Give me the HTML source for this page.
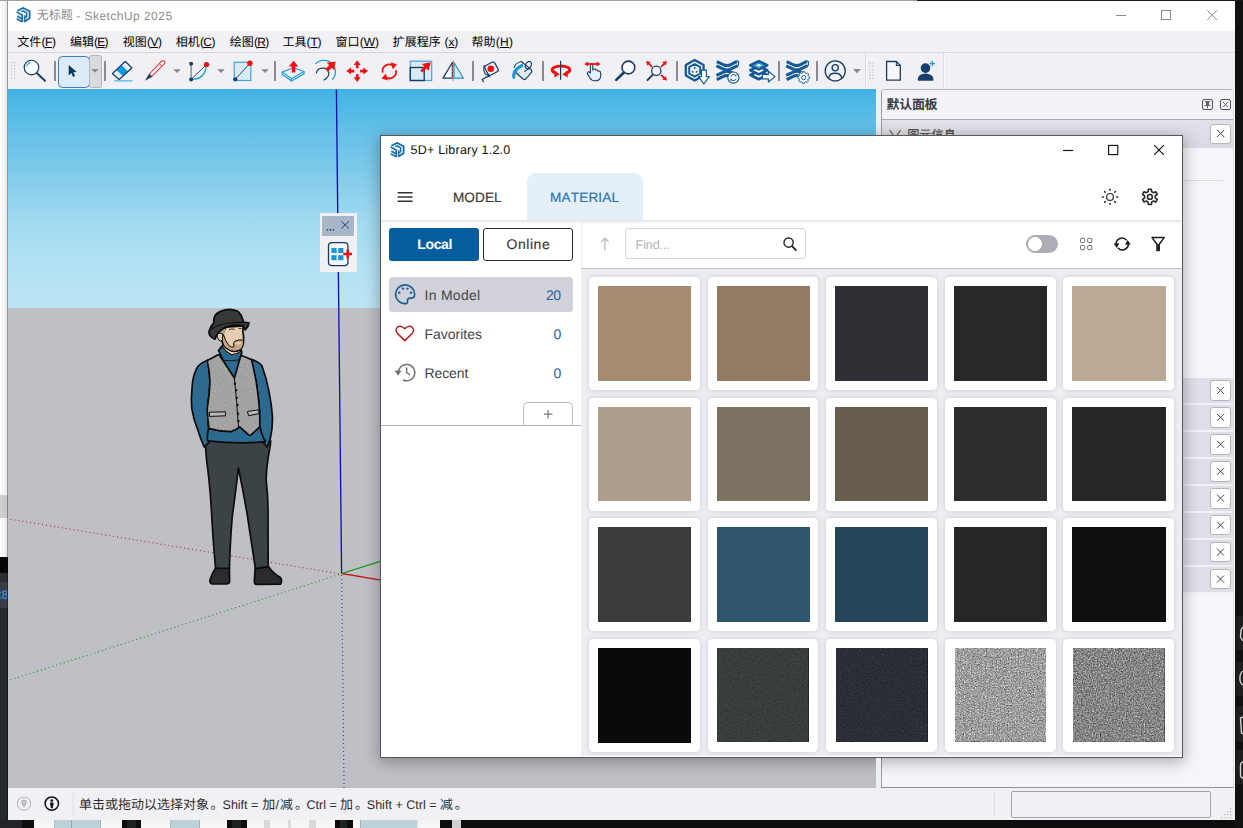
<!DOCTYPE html>
<html lang="zh">
<head>
<meta charset="utf-8">
<title>SketchUp 2025 - 5D+ Library</title>
<style>
html,body{margin:0;padding:0;}
body{width:1243px;height:828px;overflow:hidden;background:#121212;font-family:"Liberation Sans",sans-serif;}
#root{position:relative;width:1243px;height:828px;overflow:hidden;background:#121212;}
.a{position:absolute;}
.t{position:absolute;white-space:pre;line-height:1;font-family:"Liberation Sans",sans-serif;text-rendering:geometricPrecision;font-kerning:none;}
.t.c{font-family:"Liberation Sans","Noto Sans CJK SC",sans-serif;}
svg{position:absolute;overflow:visible;}
u{text-decoration:underline;text-underline-offset:1px;text-decoration-thickness:1px;}
.sep{position:absolute;width:2px;background:#8c8c8c;top:61px;height:20px;}
.dd{position:absolute;width:0;height:0;border-left:3.8px solid transparent;border-right:3.8px solid transparent;border-top:3.8px solid #8a8a8a;}
.xb{position:absolute;width:18.5px;height:18.5px;background:#fdfdfe;border:1px solid #b4b4ba;border-radius:3px;}
.card{position:absolute;width:110.8px;height:113px;background:#fff;border-radius:4.5px;box-shadow:0 0 5px rgba(40,40,90,.17);}
.sw{position:absolute;left:9.05px;top:9px;width:93.15px;height:94.8px;}
</style>
</head>
<body>
<div id="root">
<!-- desktop / other windows peeking behind -->
<div class="a" style="left:0;top:0;width:917px;height:1px;background:#a2a2a2"></div>
<div class="a" style="left:917px;top:0;width:326px;height:1px;background:#1a1a1a"></div>
<div class="a" style="left:0;top:1px;width:8px;height:494px;background:linear-gradient(90deg,#fdfdfd 0,#f6f6f6 45%,#e4e4e4 100%)"></div>
<div class="a" style="left:0;top:495px;width:8px;height:23px;background:linear-gradient(90deg,#d2d2d2,#c4c4c4)"></div>
<div class="a" style="left:0;top:518px;width:8px;height:39px;background:linear-gradient(90deg,#fdfdfd 0,#f4f4f4 50%,#e0e0e0 100%)"></div>
<div class="a" style="left:0;top:557px;width:8px;height:16px;background:#060606"></div>
<div class="a" style="left:0;top:573px;width:8px;height:9px;background:#2b2d30"></div>
<div class="a" style="left:0;top:582px;width:8px;height:26px;background:#393c42"></div>
<div class="a" style="left:0;top:588px;width:7px;height:14px;overflow:hidden"><span class="t" style="left:-5.5px;top:1px;font-size:12.5px;color:#3b86c8;font-weight:bold">28</span></div>
<div class="a" style="left:0;top:608px;width:8px;height:220px;background:#25282c"></div>
<!-- bottom strip under the window -->
<div class="a" style="left:0;top:820px;width:1243px;height:8px;background:#0d0d0d"></div>
<div class="a" style="left:0;top:820px;width:22px;height:8px;background:#222427"></div>
<div class="a" style="left:34px;top:820px;width:88px;height:8px;background:linear-gradient(90deg,#f6f6f6 0 20px,#a9c3ca 20px 21px,#bdd2d8 21px 37px,#8faab2 37px 38px,#bdd2d8 38px 66px,#9fb8bf 66px 67px,#f6f6f6 67px)"></div>
<div class="a" style="left:127px;top:820px;width:9px;height:8px;background:#1c2420"></div>
<div class="a" style="left:141px;top:820px;width:86px;height:8px;background:linear-gradient(90deg,#f6f6f6 0 29px,#a9c3ca 29px 30px,#bdd2d8 30px 58px,#9fb8bf 58px 59px,#f6f6f6 59px)"></div>
<div class="a" style="left:232px;top:820px;width:9px;height:8px;background:#1c2420"></div>
<div class="a" style="left:247px;top:820px;width:88px;height:8px;background:linear-gradient(90deg,#f6f6f6 0 17px,#d9d9d9 17px 23px,#f6f6f6 23px 41px,#dcdcdc 41px 44px,#f6f6f6 44px 62px,#d9d9d9 62px 69px,#f6f6f6 69px)"></div>
<div class="a" style="left:340px;top:820px;width:7px;height:8px;background:#1c2420"></div>
<div class="a" style="left:353px;top:820px;width:87px;height:8px;background:linear-gradient(90deg,#f6f6f6 0 7px,#9fb8bf 7px 8px,#bdd2d8 8px 64px,#e8ecec 64px 66px,#f6f6f6 66px)"></div>
<div class="a" style="left:452px;top:820px;width:9px;height:8px;background:#cfcfd3"></div>
<!-- right strip -->
<div class="a" style="left:1235px;top:1px;width:8px;height:827px;background:#111"></div>
<div class="a" style="left:1236px;top:616px;width:7px;height:34px;background:#1f1f1f"></div>
<div class="a" style="left:1236px;top:662px;width:7px;height:34px;background:#1f1f1f"></div>
<div class="a" style="left:1236px;top:706px;width:7px;height:36px;background:#1f1f1f"></div>
<div class="a" style="left:1236px;top:750px;width:7px;height:34px;background:#1f1f1f"></div>
<svg class="a" style="left:1235px;top:600px" width="8" height="228" viewBox="0 0 8 228"><g fill="none" stroke="#d0d0d0" stroke-width="1.4"><path d="M8 27 L6 30 L5.5 37 L8 41"/><path d="M8 71 Q4.5 73 5 80 Q5.5 84 8 85"/><path d="M8 117 L5.5 118 L6.5 133 L8 134"/><path d="M8 162 Q5.5 162 5.5 166 L5.5 174 Q5.5 178 8 178"/></g></svg>
<!-- main SketchUp window -->
<div class="a" style="left:7px;top:1px;width:1px;height:819px;background:rgba(0,0,0,.34)"></div>
<div class="a" style="left:8px;top:1px;width:1227px;height:819px;background:#f1f1f5"></div>
<div class="a" style="left:1234px;top:1px;width:1px;height:819px;background:#fbfbfb"></div>
<!-- title bar -->
<div class="a" style="left:8px;top:1px;width:1227px;height:30px;background:#fff"></div>
<svg style="left:16.4px;top:6.8px" width="15" height="16" viewBox="0 0 15 16"><g fill="none" stroke-linejoin="miter">
  <path d="M1.4 3.7 L7.2 0.9 L13.6 4.3 L13.6 11.3 L8.2 14.7" stroke="#1a68a4" stroke-width="1.8"/>
  <path d="M3.6 4.3 L7.2 2.6 L12 5.1 L12 10.5 L9 12.3" stroke="#9bd7f6" stroke-width="1.1"/>
  <path d="M5.4 4.9 L7.3 4.1 L10.5 5.9 L10.5 9.7 L8.6 10.8" stroke="#1a68a4" stroke-width="1.4"/>
  <path d="M0.5 4.9 L7 8.5 M1.3 9.3 L6 11.7 M0.7 11.7 L6 14.6" stroke="#1a68a4" stroke-width="1.6"/>
  <path d="M0.9 7.2 L5.6 9.8 M1.2 10.6 L5.4 12.9" stroke="#9bd7f6" stroke-width=".9"/>
  <path d="M6.3 8.3 V15.2" stroke="#1a68a4" stroke-width="1.7"/>
  <path d="M8.7 8.2 V14.6" stroke="#1a68a4" stroke-width="1.3"/>
  <path d="M7.55 7.4 V15.6" stroke="#c4e8fb" stroke-width=".9"/>
</g></svg>
<span class="t c" style="left:36.80px;top:9.30px;font-size:12px;color:#8c8c8c;">无标题</span>
<span id="ttl" class="t" style="left:76.20px;top:10.04px;font-size:12px;color:#8c8c8c;font-weight:normal;letter-spacing:0.464px;">- SketchUp 2025</span>
<svg style="left:1110px;top:5px" width="120" height="22" viewBox="0 0 120 22"><g fill="none" stroke="#8a8a8a" stroke-width="1"><path d="M6 10.5 H16"/><rect x="51.5" y="5.5" width="9" height="9"/><path d="M97.3 5.3 L107 15 M107 5.3 L97.3 15"/></g></svg>
<!-- menu bar -->
<div class="a" style="left:8px;top:31px;width:1227px;height:22px;background:#f1f1f5"></div>
<div class="a" style="left:8px;top:52px;width:1227px;height:1px;background:#d6d6da"></div>
<span class="t c" style="left:17.30px;top:35.60px;font-size:12px;color:#000;">文件</span><span id="mF" class="t" style="left:41.50px;top:35.94px;font-size:12px;color:#000;font-weight:normal;letter-spacing:-0.463px;">(<u>F</u>)</span>
<span class="t c" style="left:69.90px;top:35.60px;font-size:12px;color:#000;">编辑</span><span id="mE" class="t" style="left:94.10px;top:35.94px;font-size:12px;color:#000;font-weight:normal;letter-spacing:-0.800px;">(<u>E</u>)</span>
<span class="t c" style="left:122.70px;top:35.60px;font-size:12px;color:#000;">视图</span><span id="mV" class="t" style="left:146.90px;top:35.94px;font-size:12px;color:#000;font-weight:normal;letter-spacing:-0.500px;">(<u>V</u>)</span>
<span class="t c" style="left:175.70px;top:35.60px;font-size:12px;color:#000;">相机</span><span id="mC" class="t" style="left:199.90px;top:35.94px;font-size:12px;color:#000;font-weight:normal;letter-spacing:-0.531px;">(<u>C</u>)</span>
<span class="t c" style="left:229.70px;top:35.60px;font-size:12px;color:#000;">绘图</span><span id="mR" class="t" style="left:253.90px;top:35.94px;font-size:12px;color:#000;font-weight:normal;letter-spacing:-0.681px;">(<u>R</u>)</span>
<span class="t c" style="left:282.40px;top:35.60px;font-size:12px;color:#000;">工具</span><span id="mT" class="t" style="left:306.60px;top:35.94px;font-size:12px;color:#000;font-weight:normal;letter-spacing:-0.163px;">(<u>T</u>)</span>
<span class="t c" style="left:335.60px;top:35.60px;font-size:12px;color:#000;">窗口</span><span id="mW" class="t" style="left:359.80px;top:35.94px;font-size:12px;color:#000;font-weight:normal;letter-spacing:-0.061px;">(<u>W</u>)</span>
<span class="t c" style="left:392.80px;top:35.60px;font-size:12px;color:#000;">扩展程序</span><span id="mx" class="t" style="left:444.60px;top:35.94px;font-size:12px;color:#000;font-weight:normal;letter-spacing:-0.198px;">(<u>x</u>)</span>
<span class="t c" style="left:471.50px;top:35.60px;font-size:12px;color:#000;">帮助</span><span id="mH" class="t" style="left:495.70px;top:35.94px;font-size:12px;color:#000;font-weight:normal;letter-spacing:0.369px;">(<u>H</u>)</span>
<!-- toolbar -->
<div class="a" style="left:8px;top:53px;width:1227px;height:35px;background:#f1f1f5"></div>
<div class="a" style="left:865px;top:53px;width:1px;height:35px;background:#dcdce0"></div>
<div class="a" style="left:866px;top:53px;width:1px;height:35px;background:#fafafc"></div>
<div class="a" style="left:943px;top:53px;width:1px;height:35px;background:#dcdce0"></div>
<div class="a" style="left:944px;top:53px;width:1px;height:35px;background:#fafafc"></div>
<div class="sep" style="left:54px"></div><div class="sep" style="left:104.2px"></div><div class="sep" style="left:274px"></div>
<div class="sep" style="left:472px"></div><div class="sep" style="left:542px"></div><div class="sep" style="left:676px"></div>
<div class="sep" style="left:778px"></div><div class="sep" style="left:816.2px"></div>
<div class="a" style="left:58px;top:56px;width:29.5px;height:29.7px;background:#dcebf9;border:1px solid #3f7db6;border-radius:4.5px"></div>
<div class="a" style="left:89.4px;top:55px;width:10.2px;height:30.5px;background:#dadade;border:1px solid #b6b6ba;border-radius:3px"></div>



<svg style="left:0;top:0" width="1243" height="100" viewBox="0 0 1243 100">
<defs>
  <g id="xw" fill="none" stroke="#155a96" stroke-width="3" stroke-linecap="butt" stroke-linejoin="round">
    <path d="M0.4 1.2 L7.6 4.6 Q10.6 5.8 13.6 4.6 L20.6 1"/><path d="M0 5.4 L7.6 9 Q10.6 10.2 13.6 9 L21.2 5.2"/>
    <path d="M0 15 L7.6 11.4 Q10.6 10.2 13.6 11.4 L21.2 15"/><path d="M0.4 19.2 L7.6 15.8 Q10.6 14.6 13.6 15.8 L20.6 19.2"/>
    <path d="M20.4 0 L22.2 1 V4.6 L21 5.8" stroke-width="1.1"/>
  </g>
</defs>
<!-- dropdown arrows -->
<g fill="#8a8a8a"><path d="M91.1 69 H98.6 L94.85 72.8 Z"/><path d="M173.3 69.2 H180.9 L177.1 73 Z"/><path d="M217.2 69.2 H224.8 L221 73 Z"/><path d="M261.2 69.2 H268.8 L265 73 Z"/><path d="M853 69.1 H861 L857 73.2 Z"/></g>
<!-- grips -->
<g fill="#bcbcc4">
<rect x="11" y="62.0" width="1.2" height="1.2"/><rect x="11" y="65.1" width="1.2" height="1.2"/><rect x="11" y="68.2" width="1.2" height="1.2"/><rect x="11" y="71.3" width="1.2" height="1.2"/><rect x="11" y="74.4" width="1.2" height="1.2"/><rect x="11" y="77.5" width="1.2" height="1.2"/><rect x="14" y="62.0" width="1.2" height="1.2"/><rect x="14" y="65.1" width="1.2" height="1.2"/><rect x="14" y="68.2" width="1.2" height="1.2"/><rect x="14" y="71.3" width="1.2" height="1.2"/><rect x="14" y="74.4" width="1.2" height="1.2"/><rect x="14" y="77.5" width="1.2" height="1.2"/>
<rect x="869.3" y="62.4" width="1.2" height="1.2"/><rect x="869.3" y="65.5" width="1.2" height="1.2"/><rect x="869.3" y="68.6" width="1.2" height="1.2"/><rect x="869.3" y="71.7" width="1.2" height="1.2"/><rect x="869.3" y="74.8" width="1.2" height="1.2"/><rect x="869.3" y="77.9" width="1.2" height="1.2"/><rect x="872.3" y="62.4" width="1.2" height="1.2"/><rect x="872.3" y="65.5" width="1.2" height="1.2"/><rect x="872.3" y="68.6" width="1.2" height="1.2"/><rect x="872.3" y="71.7" width="1.2" height="1.2"/><rect x="872.3" y="74.8" width="1.2" height="1.2"/><rect x="872.3" y="77.9" width="1.2" height="1.2"/>
</g>
<!-- 1 search -->
<circle cx="31.5" cy="67.5" r="7.3" fill="#fcfdff" stroke="#183d63" stroke-width="1.15"/>
<path d="M26.6 66.4 A5.2 5.2 0 0 1 30.6 62.5" fill="none" stroke="#5cb6e8" stroke-width="1.3"/>
<path d="M37 73.2 L45 80.8" stroke="#183d63" stroke-width="1.9" stroke-linecap="round"/>
<!-- select cursor -->
<path d="M68.7 64.9 L68.7 75.4 L71.3 73 L73.1 77 L75.1 76.1 L73.4 72.3 L76.7 71.9 Z" fill="#14375c"/>
<!-- eraser -->
<path d="M125.3 61.3 L131.9 67.8 L119.1 79.6 L112.4 73.6 Z" fill="#e2eefa" stroke="#24466a" stroke-width="1.1" stroke-linejoin="round"/>
<path d="M121.7 65.2 L127.9 71.2 L122.9 75.9 L116.6 70.2 Z" fill="#0f98da"/>
<path d="M125.3 61.3 L131.9 67.8 L119.1 79.6 L112.4 73.6 Z" fill="none" stroke="#24466a" stroke-width="1.1" stroke-linejoin="round"/>
<rect x="114.2" y="80" width="18.3" height="1.7" fill="#7cc3e8"/>
<!-- pencil -->
<path d="M149.4 74 L161.6 61.2 Q163.6 60 164.8 61.6 Q165.6 63 164.2 64 L151.8 76.4 Z" fill="#f6f6fa" stroke="#d8302a" stroke-width="1.05" stroke-linejoin="round"/>
<path d="M159.3 63.7 L161.9 66.2" stroke="#d8302a" stroke-width="1"/>
<path d="M148.9 74 L152.2 76.8 L145 80.8 Z" fill="#183d63"/>
<!-- arc -->
<path d="M191.1 63.7 V79.4" stroke="#183d63" stroke-width=".8"/>
<path d="M191.1 79.4 L206.5 64.6" stroke="#183d63" stroke-width=".9"/>
<path d="M191.1 79.4 Q205.5 79.6 206.5 64.6" fill="none" stroke="#1596d6" stroke-width="1.2"/>
<circle cx="191.1" cy="63.7" r="2" fill="#183d63"/><circle cx="191.1" cy="79.4" r="2" fill="#183d63"/><circle cx="206.5" cy="64.6" r="2.7" fill="#ee1111"/>
<!-- rectangle -->
<rect x="234.2" y="62.3" width="16.6" height="18.2" fill="#d9eaf8" stroke="#45a4dc" stroke-width="1.2"/>
<path d="M235.3 79.2 L249.9 63.4" stroke="#183d63" stroke-width=".9"/>
<circle cx="235.3" cy="79.3" r="2.1" fill="#183d63"/><circle cx="249.9" cy="63.3" r="2.7" fill="#ee1111"/>
<!-- push/pull -->
<path d="M282.1 71.9 L293.6 67.7 L304.1 71.4 L304.1 73.7 L291.5 81 L282.1 74.2 Z" fill="#e6f3fc" stroke="#1596d6" stroke-width="1.1" stroke-linejoin="round"/>
<path d="M282.1 71.9 L291.5 78.7 L304.1 71.4 M291.5 78.7 V81" fill="none" stroke="#1596d6" stroke-width="1.1"/>
<path d="M291.8 72.6 V66.5 H288.8 L293.6 60.8 L298.4 66.5 H295.4 V72.6 Z" fill="#ee1111"/>
<!-- follow me -->
<path d="M315.4 63.9 A11.5 11.5 0 0 1 332.3 79.7" fill="none" stroke="#1596d6" stroke-width="1.2"/>
<path d="M316.3 73.4 A6.4 6.4 0 0 1 328.8 73 Q329 77.5 323.6 80.3" fill="none" stroke="#183d63" stroke-width="1.2"/>
<path d="M325.4 69 L329.2 65.2 L326.8 62.8 L335.6 61.4 L334.2 70.2 L331.8 67.8 L328 71.6 Z" fill="#ee1111"/>
<!-- move -->
<g fill="#ee1111"><path d="M357.2 60.2 L360.7 65 H358.5 V68.2 H355.9 V65 H353.7 Z"/><path d="M357.2 82 L360.7 77.2 H358.5 V74 H355.9 V77.2 H353.7 Z"/><path d="M346.3 71.1 L351.1 67.6 V69.8 H354.3 V72.4 H351.1 V74.6 Z"/><path d="M368.1 71.1 L363.3 67.6 V69.8 H360.1 V72.4 H363.3 V74.6 Z"/></g>
<!-- rotate -->
<g fill="none" stroke="#ee1111" stroke-width="1.8"><path d="M382.7 72.6 A6.7 6.7 0 0 1 393 65.6"/><path d="M395.9 70.2 A6.7 6.7 0 0 1 385.6 77.2"/></g>
<path d="M390.8 62.2 L397 64.4 L392.8 69.2 Z M387.8 80.6 L381.6 78.4 L385.8 73.6 Z" fill="#ee1111"/>
<!-- scale -->
<rect x="410.3" y="61.2" width="21.4" height="19.3" fill="#d9eaf8" stroke="#45a4dc" stroke-width="1.2"/>
<rect x="410.3" y="67.5" width="13.9" height="13" fill="none" stroke="#183d63" stroke-width="1.4"/>
<path d="M420.2 70.6 L424.4 66.4 L422 64 L430.6 62.2 L428.8 70.8 L426.4 68.4 L422.2 72.6 Z" fill="#ee1111"/>
<!-- flip -->
<path d="M443 78.2 H452.4 V62.5 Z" fill="#fff" stroke="#183d63" stroke-width="1.3" stroke-linejoin="round"/>
<path d="M463.4 78.2 H454 V62.5 Z" fill="#d9eaf8" stroke="#2a8fd0" stroke-width="1.2" stroke-linejoin="round"/>
<path d="M453.2 60.8 V80.6" stroke="#f06a6a" stroke-width="1.7" stroke-dasharray="2 1.1"/>
<!-- tape -->
<path d="M484.2 65.2 Q483 70 485.2 73.8 L488.6 75.8" fill="none" stroke="#183d63" stroke-width="1.1"/>
<rect x="-5.6" y="-5.4" width="11.2" height="10.8" rx="2.2" transform="translate(491.5 68.6) rotate(-29)" fill="#e9f2fb" stroke="#183d63" stroke-width="1.25"/>
<circle cx="490.8" cy="68.7" r="3.3" fill="#ee1111"/>
<path d="M489.2 75.6 L482.2 79.5 L483.4 81.8 M488.4 74.6 L489.6 76.8" fill="none" stroke="#183d63" stroke-width="1.25" stroke-linecap="round" stroke-linejoin="round"/>
<!-- paint bucket -->
<path d="M521.6 61.6 L531.4 69.8 Q532.4 71 531.6 72.2 L525.8 79 Q524.6 80 523.4 79.2 L516.2 73 Q515.6 72 516.4 71 Z" fill="#dfebf8" stroke="#183d63" stroke-width="1.15" stroke-linejoin="round"/>
<path d="M514 68 Q515.4 62.6 521.4 61.4 L523.4 63.6" fill="#fff" stroke="#183d63" stroke-width="1.05"/>
<ellipse cx="528.4" cy="65.1" rx="2.7" ry="3.9" transform="rotate(28 528.4 65.1)" fill="none" stroke="#183d63" stroke-width="1.1"/>
<path d="M524.6 71.4 L528.8 68.6" stroke="#183d63" stroke-width="1.1" stroke-linecap="round"/>
<path d="M521.8 65.6 Q516.2 68.2 514.4 72.4 Q513.4 75 513.8 77.2" fill="none" stroke="#1596d6" stroke-width="3.1" stroke-linecap="round"/>
<!-- orbit -->
<path d="M556 73.2 A8.8 4 0 1 1 566 73.2" fill="none" stroke="#ee1111" stroke-width="3"/>
<path d="M559.8 74.4 L554.6 70.6 L554.2 77.4 Z M562.2 74.4 L567.4 70.6 L567.8 77.4 Z" fill="#ee1111"/>
<path d="M560.6 60.8 V79.7" stroke="#183d63" stroke-width="1.2"/>
<!-- pan -->
<path d="M590.4 72.8 V65.2 Q590.4 63.9 591.6 63.9 Q592.8 63.9 592.8 65.2 V70.2 L593.2 69 Q594.4 68.3 595.3 69.2 L595.6 70 Q596.8 69.4 597.8 70.3 L598 71.2 Q599.4 70.7 600.3 71.8 Q601.6 75.2 600.2 78.2 Q598.6 80.9 595 80.8 Q591.6 80.8 589.8 77.8 L587.3 73.6 Q586.9 72.3 588.1 71.9 Q589.2 71.6 590.4 72.8 Z" fill="#e4f0fb" stroke="#183d63" stroke-width="1.1" stroke-linejoin="round"/>
<path d="M587 64 H598" stroke="#ee1111" stroke-width="1.8"/>
<path d="M584.2 64 L588.2 61.4 V66.6 Z M600.6 64 L596.6 61.4 V66.6 Z" fill="#ee1111"/>
<!-- zoom -->
<circle cx="628.4" cy="67.5" r="6.4" fill="#fbfcfe" stroke="#183d63" stroke-width="1.6"/>
<path d="M623.7 72.7 L616.2 79.9" stroke="#183d63" stroke-width="2.6" stroke-linecap="round"/>
<!-- zoom extents -->
<circle cx="656.3" cy="70.8" r="4.6" fill="#fbfcfe" stroke="#183d63" stroke-width="1.3"/>
<path d="M653 74.4 L647.5 80" stroke="#183d63" stroke-width="1.9" stroke-linecap="round"/>
<g fill="#ee1111"><path d="M646 61 L650.8 62 L649.6 63.2 L652.6 66.2 L651.4 67.4 L648.4 64.4 L647.2 65.6 Z"/><path d="M667 61 L662.2 62 L663.4 63.2 L660.4 66.2 L661.6 67.4 L664.6 64.4 L665.8 65.6 Z"/><path d="M667 80.6 L662.2 79.6 L663.4 78.4 L660.4 75.4 L661.6 74.2 L664.6 77.2 L665.8 76 Z"/></g>
<!-- 3d warehouse -->
<g fill="none" stroke="#155a96" stroke-linejoin="round">
<path d="M694.7 60 L703.6 65.1 V75.5 L694.7 80.6 L685.8 75.5 V65.1 Z" stroke-width="2.3"/>
<path d="M694.7 64 L700.2 67.1 V73.5 L694.7 76.6 L689.2 73.5 V67.1 Z" stroke-width="1.9"/>
<path d="M694.7 67.6 V68.4 M692.4 71.6 L693 72 M697 71.6 L696.4 72" stroke-width="1.5" stroke-linecap="round"/>
</g>
<path d="M701.4 70.2 H706.4 V76.6 H709.2 L703.9 84 L698.6 76.6 H701.4 Z" fill="#fff" stroke="#155a96" stroke-width="1.2" stroke-linejoin="round"/>
<!-- extension warehouse -->
<use href="#xw" x="716.4" y="60.4"/>
<circle cx="733.4" cy="77.6" r="5.6" fill="#fff" stroke="#155a96" stroke-width="1.2"/>
<path d="M730.6 76.6 A3 3 0 0 1 735.8 75.6 M736.2 78.6 A3 3 0 0 1 731 79.6" fill="none" stroke="#155a96" stroke-width="1"/>
<path d="M736.6 74.2 L736.4 76.6 L734.2 76 Z M730.2 81 L730.4 78.6 L732.6 79.2 Z" fill="#155a96"/>
<!-- layers -->
<g fill="#fff" stroke="#155a96" stroke-width="2.7" stroke-linejoin="round">
<path d="M750.4 75 L758.8 71 L767.2 75 L758.8 79.2 Z"/>
<path d="M750.4 70.2 L758.8 66.2 L767.2 70.2 L758.8 74.4 Z"/>
<path d="M750.4 65.2 L758.8 61.2 L767.2 65.2 L758.8 69.4 Z"/>
</g>
<path d="M754.6 65.2 L758.8 63.2 L763 65.2 L758.8 67.2 Z" fill="#fff" stroke="#1596d6" stroke-width="1.2"/>
<path d="M762.4 74.4 H768.4 V71.2 L775 76.6 L768.4 82 V78.8 H762.4 Z" fill="#fff" stroke="#155a96" stroke-width="1.2" stroke-linejoin="round"/>
<!-- extension manager -->
<use href="#xw" x="786.2" y="60.4"/>
<g transform="translate(803.7 77.6)"><circle r="5.9" fill="#f1f1f5"/>
<path d="M-0.9 -5.6 H0.9 L1.3 -4.1 L2.6 -3.5 L4 -4.3 L5.2 -3 L4.3 -1.7 L4.8 -0.4 L6.2 0 V1.8 L4.7 2.2 L4.1 3.4 L4.8 4.8 L3.5 6 L2.2 5.2 L0.9 5.7 L0.5 7.1 H-1.3 L-1.7 5.6 L-3 5.1 L-4.4 5.8 L-5.6 4.5 L-4.8 3.2 L-5.3 1.9 L-6.7 1.5 V-0.3 L-5.2 -0.7 L-4.7 -2 L-5.4 -3.4 L-4.1 -4.6 L-2.8 -3.8 L-1.4 -4.2 Z" transform="translate(0.2 -0.7) scale(.92)" fill="#fff" stroke="#155a96" stroke-width="1"/>
<circle cx="0" cy="0" r="2.1" fill="#fff" stroke="#155a96" stroke-width="1"/></g>
<!-- user -->
<circle cx="835.2" cy="70.9" r="10" fill="none" stroke="#183d63" stroke-width="1.3"/>
<circle cx="835.2" cy="67.7" r="3.1" fill="none" stroke="#183d63" stroke-width="1.3"/>
<path d="M828.6 78.2 A6.7 6 0 0 1 841.8 78.2" fill="none" stroke="#183d63" stroke-width="1.3"/>
<!-- doc -->
<path d="M886.6 61.5 H896.4 L900.3 65.4 V80.2 H886.6 Z" fill="#f6f6fa" stroke="#183d63" stroke-width="1.3" stroke-linejoin="round"/>
<path d="M896.4 61.5 V65.4 H900.3" fill="none" stroke="#183d63" stroke-width="1.1"/>
<!-- user+ -->
<circle cx="925.5" cy="68.1" r="4.8" fill="#14406b"/>
<path d="M917.8 80.7 V78.6 A7.75 5.2 0 0 1 933.3 78.6 V80.7 Z" fill="#14406b"/>
<path d="M929.6 63.6 H935 M932.3 60.9 V66.3" stroke="#1596d6" stroke-width="1.3"/>
</svg>
<!-- viewport -->
<div class="a" style="left:8px;top:88px;width:868px;height:700px;background:#bfc0c6"></div>
<div class="a" style="left:8px;top:88px;width:868px;height:220px;background:linear-gradient(180deg,rgb(64,178,227) 0,rgb(92,189,231) 14.5%,rgb(112,197,233) 28.2%,rgb(133,205,236) 41.8%,rgb(160,218,241) 60%,rgb(178,225,243) 80.5%,rgb(190,229,245) 100%)"></div>

<div class="a" style="left:8px;top:88px;width:868px;height:1px;background:#e4f4fc"></div>
<div class="a" style="left:8px;top:89px;width:868px;height:1px;background:#4faad6"></div>
<div class="a" style="left:876px;top:88px;width:5px;height:700px;background:#f0f0f4"></div><div class="a" style="left:876px;top:88px;width:1px;height:700px;background:#e2f3fb"></div>
<svg style="left:0;top:0" width="1243" height="828" viewBox="0 0 1243 828">
<defs>
<filter id="vst" x="0" y="0" width="100%" height="100%" color-interpolation-filters="sRGB"><feTurbulence type="fractalNoise" baseFrequency="0.8" numOctaves="2" seed="4" result="n"/><feColorMatrix in="n" type="matrix" values=".09 .09 .09 0 .365  .09 .09 .09 0 .365  .09 .09 .09 0 .365  0 0 0 0 1" result="g"/><feComposite in="SourceGraphic" in2="g" operator="arithmetic" k1="0" k2="1" k3="1" k4="-0.5" result="c"/><feComposite in="c" in2="SourceGraphic" operator="in"/></filter>
</defs>
<!-- axes -->
<path d="M336.4 89.5 L341.6 573.5" stroke="#1212aa" stroke-width="1.35"/>
<path d="M341.7 575 L344 788" stroke="#4444a8" stroke-width="1.3" stroke-dasharray="1.1 2.9"/>
<path d="M341.8 573.5 L381 580.2" stroke="#c21818" stroke-width="1.3"/>
<path d="M341.8 573.5 L381 561.2" stroke="#149a14" stroke-width="1.3"/>
<path d="M339 573.7 L8 518.8" stroke="#c03030" stroke-width="1.15" stroke-dasharray="1.05 2.95"/>
<path d="M339 574.6 L8 680.7" stroke="#1d9c1d" stroke-width="1.15" stroke-dasharray="1.05 2.95"/>
<!-- man -->
<g stroke="#0c0c0c" stroke-width="1.7" stroke-linejoin="round" stroke-linecap="round">
 <!-- shoes -->
 <path d="M215.6 568 L229.4 568 L229.6 582 Q229.4 584 226 584 L212 584 Q209.4 583.4 210 580 Q211.4 574.6 215.6 568 Z" fill="#2b2b2e"/>
 <path d="M255.2 568 L268.2 566 Q272 572.6 280.4 577.6 Q282.6 580.6 280.6 584.2 L256 584.4 Q254 584 254.4 580 Z" fill="#2b2b2e"/>
 <!-- pants -->
 <path d="M205 440 L270.6 440.6 Q270.6 446 269.6 449 Q266 470 266.2 480 Q268.4 500 268 516 L268.2 566.6 L255.4 568.6 Q251 540 247.6 517 Q244 495 238.4 468 Q236.4 486 232.2 517 Q230 545 229.4 568.4 L215.6 568.4 Q213 540 211.8 517 Q210.6 495 208.8 478 Q206 458 205 440 Z" fill="#3c4346"/>
 <!-- arms -->
 <path d="M208 360 Q199 363.4 196.6 368.6 Q192.6 377 192.2 386 Q190.8 398 191.8 408.6 Q193.6 420 198 430.4 Q200.6 439 204.2 447 L209.6 441.6 Q207.6 436 208.6 428.6 L207.2 408.6 Q209.4 395 210 381.6 Z" fill="#2d6a8f"/>
 <path d="M251 359.4 Q259 361.6 262 366 Q266.4 378 268.8 390.6 Q271.6 404 272.4 416 Q272.8 428 270.4 438 Q269 443 267 447 L262.6 441.4 Q261.6 434 259.8 427 L259.8 412.4 Q258.4 396 256 381.6 Z" fill="#2d6a8f"/>
 <!-- shirt hem -->
 <path d="M209 428 L259.8 426.4 Q262 436 265.4 441.6 Q240 444.4 207.6 440.8 Q206.6 435 209 428 Z" fill="#2d6a8f"/>
 <!-- neck -->
 <path d="M218.6 350.6 L222 346 L241 349.6 L241.8 352 L239.6 362 L234.6 379 L226 366 Z" fill="#2d6a8f"/>
 <path d="M222 346.6 Q226 352 231.4 354.8 Q236.6 354.6 240.6 351.4 L240.6 347 L224 343 Z" fill="#ecd5bf" stroke-width="1.1"/>
 <path d="M224.6 360.4 Q232 361.4 239.6 359.8" fill="none" stroke-width=".9"/>
 <!-- vest -->
 <path d="M207.2 360.6 Q213 357.6 218.8 354.2 Q226 365 234.4 378 Q238 366 240.8 355.2 Q246 357 251.6 359.8 Q254 370 256.2 381.6 Q258.6 397 259.8 412.4 L259.8 427 L249.8 436 L239.8 427 Q236 430 231 431.6 Q220 431.6 209 428.6 Q207.4 418 207.2 408.6 Q209.6 394 210 381.6 Q209.4 370 207.2 360.6 Z" fill="#a3a3a4" filter="url(#vst)"/>
 <path d="M234.4 378 Q236.6 400 238.6 427.4" fill="none" stroke-width="1"/>
 <path d="M209.8 412.2 L225.4 411.8 L225.4 415.8 L209.8 416.4 Z" fill="#b9b9ba" stroke-width="1"/>
 <path d="M247.8 411.4 L258.8 409.8 L259 413.6 L249 415.6 Z" fill="#b9b9ba" stroke-width="1"/>
 <!-- head -->
 <path d="M223.6 331 L226 327.2 L243.2 326 Q242.6 330 243 333 Q244 336.6 243.6 339.4 Q243.6 343.6 242.4 346.4 Q241.4 349.2 239.2 350.4 Q235 351.8 231.4 351 Q226.6 349 223.6 345.6 Q222 342.6 222 339.4 Z" fill="#e8cdb2"/>
 <path d="M223.4 334.6 Q225.4 341.4 229 345.6 Q232 348.4 234.2 346.6 Q232.6 343.6 234.6 341.4 Q238 339.4 242.6 340 L243.6 341 Q243.8 345 242 347.6 Q240.6 350 238 350.6 Q234 351.8 231 350.8 Q226.6 348.8 223.8 345.4 Q222.2 342 222.2 339 Z" fill="#c9a685" stroke-width="1"/>
 <path d="M234.8 342.8 Q238 341.4 242 342.4 Q240.6 344.6 237.2 344.8 Z" fill="#e8cdb2" stroke="none"/>
 <path d="M218 329.4 L225.2 328 L224.4 334.6 L219 334 Z" fill="#aaa298" stroke="none"/>
 <path d="M217.4 333.6 Q216.6 337 218.6 340 Q220.6 341.6 222.4 340.6 L222.8 334 Q220 332.4 217.4 333.6 Z" fill="#e8cdb2" stroke-width="1"/>
 <!-- hat -->
 <path d="M213.7 322.8 Q213.4 319 214.6 316.4 Q216.6 313 220.4 311.4 Q225 309.4 229.8 309.4 Q234.6 309.6 238.5 311.8 Q241.6 314.6 242.8 319.6 L243.6 322.4 Q246 322 249.1 322.8 Q248.6 326.6 245.2 329.8 L243.2 325.9 Q239 325 235.3 325.1 Q230 325.6 225.9 327.1 Q221 329.6 218 333 Q216 336 214.9 339.3 Q211.4 338 209.8 335.3 Q208.6 333 209 331.4 Q210.4 326 213.7 322.8 Z" fill="#383838"/>
 <path d="M213.7 322.8 Q211.4 326 211.8 329.1 Q215 326.4 219.6 325.1 Q225 323.2 231.4 322.8 Q238 322.2 243.6 322.4" fill="none" stroke-width="1"/>
</g>
<g fill="#111"><circle cx="234.9" cy="383.7" r="1.2"/><circle cx="236.1" cy="390.2" r="1.2"/><circle cx="236.7" cy="397.9" r="1.2"/><circle cx="237.5" cy="405.1" r="1.2"/><circle cx="238" cy="413.8" r="1.2"/><circle cx="238.4" cy="421" r="1.2"/></g>
<path d="M229 329.6 Q231.6 328.4 234.4 329.4 M238.6 328.6 L241.6 328.4" stroke="#2a201a" stroke-width=".9" fill="none"/>
</svg>
<!-- floating toolbar -->
<div class="a" style="left:320px;top:213px;width:37px;height:58.6px;background:#f0f0f5"></div>
<div class="a" style="left:322px;top:216px;width:32.2px;height:19.8px;background:#a9b5c9"></div>
<svg style="left:320px;top:213px" width="37" height="59" viewBox="320 213 37 59">
<g fill="#3a4660"><rect x="326.6" y="229" width="1.5" height="1.6"/><rect x="329.6" y="229" width="1.5" height="1.6"/><rect x="332.6" y="229" width="1.5" height="1.6"/></g>
<path d="M341.4 221.2 L349 228.6 M349 221.2 L341.4 228.6" stroke="#2a4a78" stroke-width="1"/>
<rect x="328.5" y="242.6" width="19.4" height="23" rx="3.4" fill="#f4f7fb" stroke="#1b3a5c" stroke-width="1.3"/>
<g fill="#1596d6"><rect x="331.4" y="248" width="5.2" height="5"/><rect x="338.2" y="248" width="5.2" height="5"/><rect x="331.4" y="255.2" width="5.2" height="5"/><rect x="338.2" y="255.2" width="5.2" height="5"/></g>
<path d="M343.2 254 H352 M347.6 249.6 V258.4" stroke="#ee1111" stroke-width="2.4"/>
</svg>
<!-- default tray -->
<div class="a" style="left:881px;top:89px;width:353px;height:699px;background:#f4f6fb;border:1px solid #b4b4ba;border-left-color:#9c9ca2;border-bottom-color:#909096;border-right-color:#dcdce2;box-sizing:border-box;border-radius:4px 4px 0 0"></div>
<div class="a" style="left:882px;top:90px;width:351px;height:29px;background:#f2f2f7;border-radius:3px 3px 0 0"></div>
<span class="t c" style="left:886.60px;top:98.30px;font-size:13px;color:#3a3a48;font-weight:bold;letter-spacing:-0.35px;">默认面板</span>
<div class="a" style="left:1202px;top:99px;width:9px;height:9px;border:1px solid #55555c;border-radius:2px;background:#f3f3f7"></div>
<div class="a" style="left:1220px;top:99px;width:9px;height:9px;border:1px solid #55555c;border-radius:2px;background:#f3f3f7"></div>
<svg style="left:1200px;top:97px" width="34" height="16" viewBox="1200 97 34 16"><g fill="none" stroke="#606066" stroke-width="1"><path d="M1204.8 101.6 H1210.2 M1204.6 105.4 H1210.4 M1207.5 105.4 V108.4"/><path d="M1207.5 101.6 V105.4" stroke-width="3"/><path d="M1223 102 L1228 107.2 M1228 102 L1223 107.2"/></g></svg>
<div class="a" style="left:882px;top:119px;width:351px;height:1px;background:#a9a9b0"></div>
<div class="a" style="left:882px;top:120px;width:351px;height:28px;background:linear-gradient(180deg,#e2e2ea,#d9d9e2)"></div>
<svg style="left:886px;top:126px" width="18" height="14" viewBox="886 126 18 14"><path d="M889.6 130 L895.1 138 L900.6 130" fill="none" stroke="#555" stroke-width="1.1"/></svg>
<span class="t c" style="left:907.20px;top:129.20px;font-size:12.2px;color:#333;">图元信息</span>
<div class="xb" style="left:1210px;top:123.5px"></div>
<div class="a" style="left:890px;top:180px;width:333px;height:1px;background:#d9d9e0"></div>
<div class="a" style="left:882px;top:378px;width:351px;height:216px;background:#f1f1f7"></div>
<div class="a" style="left:882px;top:378.00px;width:351px;height:25.3px;background:linear-gradient(90deg,#d8d8e1 0,#dcdce5 60%,#dfdfe8 100%)"></div><div class="xb" style="left:1210px;top:380.20px"></div><div class="a" style="left:882px;top:404.95px;width:351px;height:25.3px;background:linear-gradient(90deg,#d8d8e1 0,#dcdce5 60%,#dfdfe8 100%)"></div><div class="xb" style="left:1210px;top:407.15px"></div><div class="a" style="left:882px;top:431.90px;width:351px;height:25.3px;background:linear-gradient(90deg,#d8d8e1 0,#dcdce5 60%,#dfdfe8 100%)"></div><div class="xb" style="left:1210px;top:434.10px"></div><div class="a" style="left:882px;top:458.85px;width:351px;height:25.3px;background:linear-gradient(90deg,#d8d8e1 0,#dcdce5 60%,#dfdfe8 100%)"></div><div class="xb" style="left:1210px;top:461.05px"></div><div class="a" style="left:882px;top:485.80px;width:351px;height:25.3px;background:linear-gradient(90deg,#d8d8e1 0,#dcdce5 60%,#dfdfe8 100%)"></div><div class="xb" style="left:1210px;top:488.00px"></div><div class="a" style="left:882px;top:512.75px;width:351px;height:25.3px;background:linear-gradient(90deg,#d8d8e1 0,#dcdce5 60%,#dfdfe8 100%)"></div><div class="xb" style="left:1210px;top:514.95px"></div><div class="a" style="left:882px;top:539.70px;width:351px;height:25.3px;background:linear-gradient(90deg,#d8d8e1 0,#dcdce5 60%,#dfdfe8 100%)"></div><div class="xb" style="left:1210px;top:541.90px"></div><div class="a" style="left:882px;top:566.65px;width:351px;height:25.3px;background:linear-gradient(90deg,#d8d8e1 0,#dcdce5 60%,#dfdfe8 100%)"></div><div class="xb" style="left:1210px;top:568.85px"></div>

<svg style="left:1200px;top:100px" width="40" height="500" viewBox="1200 100 40 500"><g stroke="#46464c" stroke-width="1" fill="none">
<path d="M1217 129.8 L1224.2 137 M1224.2 129.8 L1217 137"/>
<path d="M1217 386.90 l7 7 m0 -7 l-7 7"/><path d="M1217 413.85 l7 7 m0 -7 l-7 7"/><path d="M1217 440.80 l7 7 m0 -7 l-7 7"/><path d="M1217 467.75 l7 7 m0 -7 l-7 7"/><path d="M1217 494.70 l7 7 m0 -7 l-7 7"/><path d="M1217 521.65 l7 7 m0 -7 l-7 7"/><path d="M1217 548.60 l7 7 m0 -7 l-7 7"/><path d="M1217 575.55 l7 7 m0 -7 l-7 7"/>
</g></svg>
<!-- status bar -->
<div class="a" style="left:8px;top:788px;width:1227px;height:32px;background:#f1f1f5"></div>
<svg style="left:8px;top:788px" width="80" height="32" viewBox="8 788 80 32">
<circle cx="24" cy="803.6" r="6.6" fill="none" stroke="#b0b0b4" stroke-width="1"/>
<path d="M24 799.6 A2.7 2.7 0 0 1 26.7 802.3 C26.7 804 24.6 805.6 24 808 C23.4 805.6 21.3 804 21.3 802.3 A2.7 2.7 0 0 1 24 799.6 Z" fill="#b0b0b4"/><circle cx="24" cy="802.3" r="1" fill="#f1f1f5"/>
<circle cx="51.8" cy="803.6" r="6.7" fill="none" stroke="#111" stroke-width="1.5"/>
<circle cx="51.8" cy="800.6" r="1.35" fill="#111"/><path d="M50.1 802.6 H53.5 V805.4 H52.9 V808.2 H50.7 V805.4 H50.1 Z" fill="#111"/>
<rect x="72.6" y="793" width="1" height="22" fill="#dcdce2"/>
</svg>
<span class="t c" style="left:78.90px;top:798.40px;font-size:13px;color:#2e2e2e;">单击或拖动以选择对象</span>
<span class="t c" style="left:210.40px;top:798.40px;font-size:13px;color:#2e2e2e;">。</span>
<span id="s1" class="t" style="left:222.60px;top:799.22px;font-size:12.5px;color:#2e2e2e;font-weight:normal;letter-spacing:-0.014px;">Shift =</span>
<span class="t c" style="left:262.20px;top:798.40px;font-size:13px;color:#2e2e2e;">加</span><span id="s1b" class="t" style="left:275.60px;top:799.22px;font-size:12.5px;color:#2e2e2e;font-weight:normal;letter-spacing:0.000px;">/</span><span class="t c" style="left:279.90px;top:798.40px;font-size:13px;color:#2e2e2e;">减</span>
<span class="t c" style="left:295.00px;top:798.40px;font-size:13px;color:#2e2e2e;">。</span>
<span id="s2" class="t" style="left:306.60px;top:799.22px;font-size:12.5px;color:#2e2e2e;font-weight:normal;letter-spacing:-0.023px;">Ctrl =</span>
<span class="t c" style="left:340.10px;top:798.40px;font-size:13px;color:#2e2e2e;">加</span>
<span class="t c" style="left:355.00px;top:798.40px;font-size:13px;color:#2e2e2e;">。</span>
<span id="s3" class="t" style="left:366.80px;top:799.22px;font-size:12.5px;color:#2e2e2e;font-weight:normal;letter-spacing:0.018px;">Shift + Ctrl =</span>
<span class="t c" style="left:440.10px;top:798.40px;font-size:13px;color:#2e2e2e;">减</span>
<span class="t c" style="left:454.80px;top:798.40px;font-size:13px;color:#2e2e2e;">。</span>
<div class="a" style="left:994px;top:792px;width:1px;height:24px;background:#dcdce2"></div>
<div class="a" style="left:1011px;top:791px;width:198px;height:25px;border:1px solid #a2a2a8;border-radius:2px;background:#f1f1f5"></div>
<svg style="left:1220px;top:806px" width="14" height="14" viewBox="0 0 14 14"><g fill="#bdbdc4"><rect x="10" y="2" width="1.3" height="1.3"/><rect x="7" y="5" width="1.3" height="1.3"/><rect x="10" y="5" width="1.3" height="1.3"/><rect x="4" y="8" width="1.3" height="1.3"/><rect x="7" y="8" width="1.3" height="1.3"/><rect x="10" y="8" width="1.3" height="1.3"/><rect x="1" y="11" width="1.3" height="1.3"/><rect x="4" y="11" width="1.3" height="1.3"/><rect x="7" y="11" width="1.3" height="1.3"/><rect x="10" y="11" width="1.3" height="1.3"/></g></svg>
<!-- 5D+ Library dialog -->
<div class="a" style="left:380px;top:135px;width:801px;height:621px;background:#fff;border:1px solid #58585c;box-shadow:0 3px 14px 1px rgba(0,0,0,.30)"></div>
<svg style="left:389.5px;top:142.0px" width="15" height="16" viewBox="0 0 15 16"><g fill="none" stroke-linejoin="miter">
  <path d="M1.4 3.7 L7.2 0.9 L13.6 4.3 L13.6 11.3 L8.2 14.7" stroke="#1a68a4" stroke-width="1.8"/>
  <path d="M3.6 4.3 L7.2 2.6 L12 5.1 L12 10.5 L9 12.3" stroke="#9bd7f6" stroke-width="1.1"/>
  <path d="M5.4 4.9 L7.3 4.1 L10.5 5.9 L10.5 9.7 L8.6 10.8" stroke="#1a68a4" stroke-width="1.4"/>
  <path d="M0.5 4.9 L7 8.5 M1.3 9.3 L6 11.7 M0.7 11.7 L6 14.6" stroke="#1a68a4" stroke-width="1.6"/>
  <path d="M0.9 7.2 L5.6 9.8 M1.2 10.6 L5.4 12.9" stroke="#9bd7f6" stroke-width=".9"/>
  <path d="M6.3 8.3 V15.2" stroke="#1a68a4" stroke-width="1.7"/>
  <path d="M8.7 8.2 V14.6" stroke="#1a68a4" stroke-width="1.3"/>
  <path d="M7.55 7.4 V15.6" stroke="#c4e8fb" stroke-width=".9"/>
</g></svg>
<span id="dt" class="t" style="left:410.60px;top:144.42px;font-size:12.5px;color:#111;font-weight:normal;letter-spacing:0.214px;">5D+ Library 1.2.0</span>
<svg style="left:1055px;top:140px" width="120" height="20" viewBox="1055 140 120 20"><g fill="none" stroke="#111" stroke-width="1.15"><path d="M1063 150.5 H1073.2"/><rect x="1108.6" y="145.4" width="9.2" height="9.2"/><path d="M1154.2 145.2 L1163.8 154.8 M1163.8 145.2 L1154.2 154.8"/></g></svg>
<!-- tab row -->
<div class="a" style="left:527px;top:172.6px;width:116px;height:48.4px;background:#e4eff8;border-radius:9px 9px 0 0"></div>
<div class="a" style="left:381px;top:220px;width:801px;height:1px;background:#e3e3e6"></div>
<div class="a" style="left:381px;top:221px;width:801px;height:3px;background:linear-gradient(180deg,rgba(0,0,0,.07),rgba(0,0,0,0))"></div>
<svg style="left:395px;top:190px" width="20" height="14" viewBox="395 190 20 14"><path d="M397.6 192.7 H412.6 M397.6 196.9 H412.6 M397.6 201.2 H412.6" stroke="#333" stroke-width="1.5"/></svg>
<span id="tm" class="t" style="left:452.90px;top:191.39px;font-size:13.6px;color:#3a3a3a;font-weight:normal;letter-spacing:0.105px;-webkit-text-stroke:.18px #3a3a3a;">MODEL</span>
<span id="tmat" class="t" style="left:550.00px;top:191.39px;font-size:13.6px;color:#2b73b5;font-weight:normal;letter-spacing:0.155px;-webkit-text-stroke:.18px #2b73b5;">MATERIAL</span>
<svg style="left:1098px;top:185px" width="64" height="24" viewBox="1098 185 64 24">
<g fill="none" stroke="#2a2a2e"><circle cx="1110" cy="196.9" r="3.4" stroke-width="1.2"/>
<g stroke-width="1.5" stroke-linecap="round"><path d="M1116.70 196.90 L1117.70 196.90"/><path d="M1114.74 201.64 L1115.44 202.34"/><path d="M1110.00 203.60 L1110.00 204.60"/><path d="M1105.26 201.64 L1104.56 202.34"/><path d="M1103.30 196.90 L1102.30 196.90"/><path d="M1105.26 192.16 L1104.56 191.46"/><path d="M1110.00 190.20 L1110.00 189.20"/><path d="M1114.74 192.16 L1115.44 191.46"/></g>
<circle cx="1149.9" cy="196.9" r="2.4" stroke-width="1.6"/>
<path d="M1148.20 191.67 L1148.36 189.25 L1151.44 189.25 L1151.60 191.67 L1153.58 192.81 L1155.75 191.74 L1157.29 194.41 L1155.28 195.76 L1155.28 198.04 L1157.29 199.39 L1155.75 202.06 L1153.58 200.99 L1151.60 202.13 L1151.44 204.55 L1148.36 204.55 L1148.20 202.13 L1146.22 200.99 L1144.05 202.06 L1142.51 199.39 L1144.52 198.04 L1144.52 195.76 L1142.51 194.41 L1144.05 191.74 L1146.22 192.81 Z" stroke-width="1.6" stroke-linejoin="round"/></g></svg>
<!-- left panel -->
<div class="a" style="left:581px;top:221px;width:3px;height:536px;background:linear-gradient(90deg,rgba(0,0,0,.06),rgba(0,0,0,0))"></div>
<div class="a" style="left:389px;top:228px;width:90px;height:33px;background:#035d9f;border-radius:3px"></div>
<span id="bl" class="t" style="left:417.30px;top:237.05px;font-size:14px;color:#fff;font-weight:bold;letter-spacing:-0.369px;">Local</span>
<div class="a" style="left:483px;top:228px;width:88px;height:31px;border:1px solid #2c2c2c;border-radius:3px;background:#fff"></div>
<span id="bo" class="t" style="left:506.50px;top:236.95px;font-size:14px;color:#333;font-weight:normal;letter-spacing:0.543px;-webkit-text-stroke:.12px #333;">Online</span>
<div class="a" style="left:389px;top:277.3px;width:184px;height:34.5px;background:#d1d2d9;border-radius:3.5px"></div>
<svg style="left:392px;top:280px" width="28" height="106" viewBox="392 280 28 106">
<!-- palette -->
<g fill="none" stroke="#1b5f9a" stroke-width="1.7" stroke-linejoin="round"><path d="M405 284.9 A9.4 9.4 0 1 0 405 303.7 Q407.8 303.7 407.5 301.3 Q407 298.2 410.2 298.2 L411.6 298.2 Q414.6 298 414.6 294.3 A9.5 9.4 0 0 0 405 284.9 Z"/></g>
<g fill="#1b5f9a"><circle cx="399.3" cy="292.8" r="1.2"/><circle cx="402.9" cy="288.6" r="1.2"/><circle cx="407.5" cy="288.6" r="1.2"/><circle cx="411" cy="292.8" r="1.2"/></g>
<!-- heart -->
<path d="M404.8 340.6 L397.6 333.6 Q394.6 330 397.4 327.2 Q400.8 324.6 404.8 328.6 Q408.8 324.6 412.2 327.2 Q415 330 412 333.6 Z" fill="none" stroke="#b3262b" stroke-width="1.5" stroke-linejoin="round"/>
<!-- history -->
<g fill="none" stroke="#707076" stroke-width="1.5"><path d="M398.4 372.4 A8.2 8.2 0 1 1 403 380"/><path d="M406.6 367.6 V372.6 L410 375"/></g>
<path d="M394.6 370.6 L401.6 370.8 L398 375.8 Z" fill="#707076"/>
</svg>
<span id="l1" class="t" style="left:424.50px;top:288.05px;font-size:14px;color:#444;font-weight:normal;letter-spacing:0.273px;">In Model</span>
<span id="n1" class="t" style="left:546.00px;top:288.05px;font-size:14px;color:#2b5f9b;font-weight:normal;letter-spacing:-0.486px;">20</span>
<span id="l2" class="t" style="left:424.50px;top:327.05px;font-size:14px;color:#444;font-weight:normal;letter-spacing:-0.009px;">Favorites</span>
<span id="n2" class="t" style="left:553.50px;top:327.05px;font-size:14px;color:#2b5f9b;font-weight:normal;letter-spacing:0.000px;">0</span>
<span id="l3" class="t" style="left:424.50px;top:366.05px;font-size:14px;color:#444;font-weight:normal;letter-spacing:-0.114px;">Recent</span>
<span id="n3" class="t" style="left:553.50px;top:366.05px;font-size:14px;color:#2b5f9b;font-weight:normal;letter-spacing:0.000px;">0</span>
<div class="a" style="left:523px;top:402px;width:48px;height:23px;border:1px solid #b6b9c4;border-bottom:none;border-radius:5px 5px 0 0;background:#fff"></div>
<svg style="left:540px;top:406px" width="16" height="16" viewBox="540 406 16 16"><path d="M543.8 414.2 H552.4 M548.1 409.9 V418.5" stroke="#777" stroke-width="1.2"/></svg>
<div class="a" style="left:381px;top:425px;width:200px;height:1px;background:#b0b2bc"></div>
<!-- search/tool row -->
<svg style="left:598px;top:234px" width="14" height="20" viewBox="598 234 14 20"><path d="M604.9 250.4 V238.4 M601.2 242 L604.9 238.2 L608.6 242" fill="none" stroke="#c4c4c4" stroke-width="1.5"/></svg>
<div class="a" style="left:625px;top:228px;width:178.8px;height:29px;border:1px solid #d6d6d6;border-radius:3px;background:#fff"></div>
<span id="fd" class="t" style="left:635.60px;top:239.33px;font-size:12.6px;color:#b2b2b2;font-weight:normal;letter-spacing:-0.133px;">Find...</span>
<svg style="left:780px;top:235px" width="20" height="18" viewBox="780 235 20 18"><circle cx="788.6" cy="242.6" r="4.6" fill="none" stroke="#222" stroke-width="1.4"/><path d="M792 246.2 L795.9 250.2" stroke="#222" stroke-width="1.8" stroke-linecap="round"/></svg>
<div class="a" style="left:1026px;top:235px;width:32px;height:18px;border-radius:9px;background:#adadb5"></div>
<div class="a" style="left:1027.9px;top:237px;width:14px;height:14px;border-radius:7px;background:#fff"></div>
<svg style="left:1078px;top:234px" width="90" height="20" viewBox="1078 234 90 20">
<g fill="none" stroke="#6a6a6e" stroke-width="1"><rect x="1080.5" y="238.4" width="4.1" height="4.1" rx=".8"/><rect x="1087.7" y="238.4" width="4.1" height="4.1" rx=".8"/><rect x="1080.5" y="245.5" width="4.1" height="4.1" rx=".8"/><rect x="1087.7" y="245.5" width="4.1" height="4.1" rx=".8"/></g>
<g fill="none" stroke="#1e1e22" stroke-width="1.5"><path d="M1116.4 245.6 A5.9 5.9 0 0 1 1126.6 240.2"/><path d="M1128 242.4 A5.9 5.9 0 0 1 1117.8 247.8"/></g>
<path d="M1113.6 243.4 L1119.4 243.2 L1116.8 248 Z M1130.8 244.6 L1125 244.8 L1127.6 240 Z" fill="#1e1e22"/>
<path d="M1152 237.6 H1164.2 L1159.2 244.2 V250.4 H1157 V244.2 Z" fill="none" stroke="#1e1e22" stroke-width="1.5" stroke-linejoin="round"/><rect x="1157" y="244" width="2.2" height="6.4" fill="#1e1e22"/>
</svg>
<div class="a" style="left:581px;top:268px;width:601px;height:1px;background:#c3c3ca"></div>
<!-- grid -->
<div class="a" style="left:581px;top:269px;width:601px;height:487px;background:#ededf2"></div>
<div class="a" style="left:581px;top:269px;width:601px;height:487px;overflow:hidden">
<div class="card" style="left:7.95px;top:7.90px"><div class="sw" style="background:#a68b70"></div></div><div class="card" style="left:126.57px;top:7.90px"><div class="sw" style="background:#927b62"></div></div><div class="card" style="left:245.19px;top:7.90px"><div class="sw" style="background:#2f3035"></div></div><div class="card" style="left:363.81px;top:7.90px"><div class="sw" style="background:#28282a"></div></div><div class="card" style="left:482.43px;top:7.90px"><div class="sw" style="background:#bca995"></div></div><div class="card" style="left:7.95px;top:128.60px"><div class="sw" style="background:#ae9d8a"></div></div><div class="card" style="left:126.57px;top:128.60px"><div class="sw" style="background:#7c7261"></div></div><div class="card" style="left:245.19px;top:128.60px"><div class="sw" style="background:#685d4e"></div></div><div class="card" style="left:363.81px;top:128.60px"><div class="sw" style="background:#2e2d2c"></div></div><div class="card" style="left:482.43px;top:128.60px"><div class="sw" style="background:#262626"></div></div><div class="card" style="left:7.95px;top:249.30px"><div class="sw" style="background:#3b3b3b"></div></div><div class="card" style="left:126.57px;top:249.30px"><div class="sw" style="background:#30566f"></div></div><div class="card" style="left:245.19px;top:249.30px"><div class="sw" style="background:#27465a"></div></div><div class="card" style="left:363.81px;top:249.30px"><div class="sw" style="background:#262626"></div></div><div class="card" style="left:482.43px;top:249.30px"><div class="sw" style="background:#101010"></div></div><div class="card" style="left:7.95px;top:370.00px"><div class="sw" style="background:#0a0a0a"></div></div><div class="card" style="left:126.57px;top:370.00px"><svg class="sw" width="91.7" height="93.9" viewBox="0 0 91.7 93.9" style="overflow:hidden;left:9.75px;width:91.7px;height:93.9px"><filter id="txa" x="0" y="0" width="100%" height="100%" color-interpolation-filters="sRGB"><feTurbulence type="fractalNoise" baseFrequency="0.9" numOctaves="3" seed="5" result="n"/><feColorMatrix in="n" type="matrix" values="0.100 0.100 0.100 0 0.350  0.100 0.100 0.100 0 0.350  0.100 0.100 0.100 0 0.350  0 0 0 0 1" result="g"/><feComposite in="SourceGraphic" in2="g" operator="arithmetic" k1="0" k2="1" k3="1" k4="-0.5"/></filter><rect width="91.7" height="93.9" fill="#383d3d" filter="url(#txa)"/></svg></div><div class="card" style="left:245.19px;top:370.00px"><svg class="sw" width="91.7" height="93.9" viewBox="0 0 91.7 93.9" style="overflow:hidden;left:9.75px;width:91.7px;height:93.9px"><filter id="txb" x="0" y="0" width="100%" height="100%" color-interpolation-filters="sRGB"><feTurbulence type="fractalNoise" baseFrequency="0.9" numOctaves="3" seed="8" result="n"/><feColorMatrix in="n" type="matrix" values="0.100 0.100 0.100 0 0.350  0.100 0.100 0.100 0 0.350  0.100 0.100 0.100 0 0.350  0 0 0 0 1" result="g"/><feComposite in="SourceGraphic" in2="g" operator="arithmetic" k1="0" k2="1" k3="1" k4="-0.5"/></filter><rect width="91.7" height="93.9" fill="#2c2e35" filter="url(#txb)"/></svg></div><div class="card" style="left:363.81px;top:370.00px"><svg class="sw" width="91.7" height="93.9" viewBox="0 0 91.7 93.9" style="overflow:hidden;left:9.75px;width:91.7px;height:93.9px"><filter id="txc" x="0" y="0" width="100%" height="100%" color-interpolation-filters="sRGB"><feTurbulence type="fractalNoise" baseFrequency="0.73" numOctaves="3" seed="11" result="n"/><feColorMatrix in="n" type="matrix" values="0.440 0.440 0.440 0 -0.160  0.440 0.440 0.440 0 -0.160  0.440 0.440 0.440 0 -0.160  0 0 0 0 1" result="g"/><feComposite in="SourceGraphic" in2="g" operator="arithmetic" k1="0" k2="1" k3="1" k4="-0.5"/></filter><rect width="91.7" height="93.9" fill="#9d9d9d" filter="url(#txc)"/></svg></div><div class="card" style="left:482.43px;top:370.00px"><svg class="sw" width="91.7" height="93.9" viewBox="0 0 91.7 93.9" style="overflow:hidden;left:9.75px;width:91.7px;height:93.9px"><filter id="txd" x="0" y="0" width="100%" height="100%" color-interpolation-filters="sRGB"><feTurbulence type="fractalNoise" baseFrequency="0.73" numOctaves="3" seed="17" result="n"/><feColorMatrix in="n" type="matrix" values="0.420 0.420 0.420 0 -0.130  0.420 0.420 0.420 0 -0.130  0.420 0.420 0.420 0 -0.130  0 0 0 0 1" result="g"/><feComposite in="SourceGraphic" in2="g" operator="arithmetic" k1="0" k2="1" k3="1" k4="-0.5"/></filter><rect width="91.7" height="93.9" fill="#858585" filter="url(#txd)"/></svg></div>
</div>
<div class="a" style="left:876px;top:758px;width:5px;height:30px;background:#f0f0f4"></div><div class="a" style="left:876px;top:758px;width:1px;height:30px;background:#e6f0f6"></div>
</div>
</body>
</html>
